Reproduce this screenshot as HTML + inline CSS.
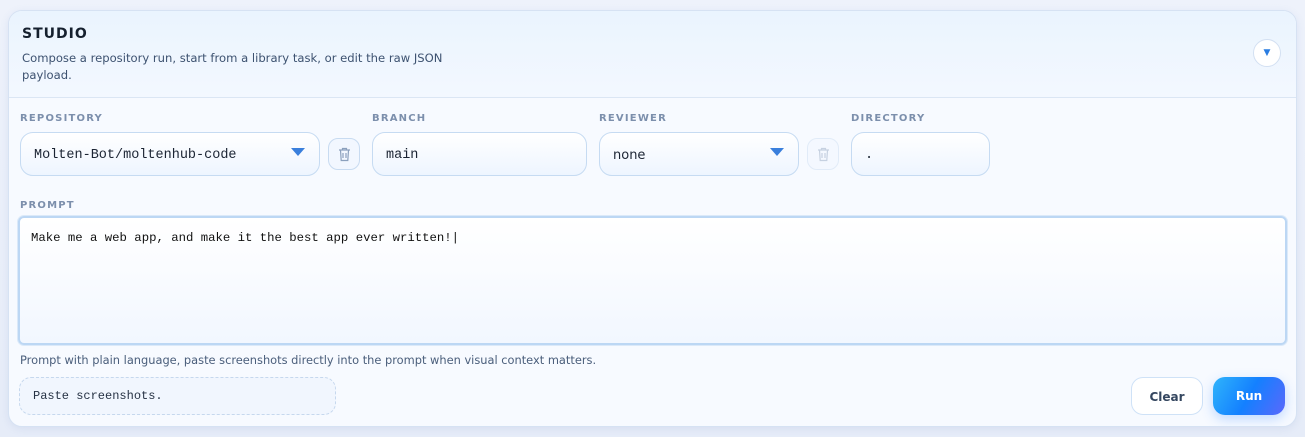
<!DOCTYPE html>
<html><head><style>
*{box-sizing:border-box;margin:0;padding:0}
body{width:1305px;height:437px;background:linear-gradient(180deg,#eef2fb,#e6ecf8);font-family:"DejaVu Sans","Liberation Sans",sans-serif;position:relative;overflow:hidden}
.card{position:absolute;left:8px;top:10px;width:1289px;height:417px;border:1px solid #d6e2f3;border-radius:14px;background:#f7faff;overflow:hidden;box-shadow:0 2px 8px rgba(120,150,200,.15)}
.hdr{position:absolute;left:0;top:0;width:100%;height:87px;background:linear-gradient(180deg,#eaf4fe,#f3f8ff);border-bottom:1px solid #dbe6f4}
h1{position:absolute;left:13px;top:15px;font-size:14px;font-weight:bold;letter-spacing:1px;color:#15202e}
.desc{position:absolute;left:13px;top:39px;width:440px;font-size:11.6px;line-height:17px;color:#3d5270}
.tog{position:absolute;left:1244px;top:28px;width:28px;height:28px;border-radius:50%;background:#fff;border:1px solid #d3e0f2;color:#2a7de1;font-size:9px;text-align:center;line-height:27px}
.lbl{position:absolute;top:102px;font-size:10px;font-weight:bold;letter-spacing:1.2px;color:#7c8fac}
.in{position:absolute;top:121px;height:44px;border:1px solid #c6dbf2;border-radius:13px;background:linear-gradient(180deg,#fff,#eef5ff);font-family:"Liberation Mono",monospace;font-size:13.5px;color:#1b2433;padding:2px 13px 0;line-height:42px}
.arr{position:absolute;right:14px;top:15px;width:0;height:0;border-left:7px solid transparent;border-right:7px solid transparent;border-top:8px solid #3a7fdc}
.tr{position:absolute;top:127px;width:32px;height:32px;border:1px solid #c8dbf1;border-radius:10px;background:#f2f7ff}
.tr svg{position:absolute;left:9px;top:8px}
.ta{position:absolute;left:9px;top:205px;width:1269px;height:129px;border:2px solid #bcd7f4;box-shadow:0 0 0 1px #dbe9f9;border-radius:6px;background:linear-gradient(180deg,#fff,#f2f7ff);font-family:"Liberation Mono",monospace;font-size:12.3px;color:#111;padding:13px 11px}
.hint{position:absolute;left:11px;top:342px;font-size:11.4px;color:#4a5e7b}
.paste{position:absolute;left:10px;top:366px;width:317px;height:38px;border:1px dashed #c6d8ee;border-radius:12px;background:#f1f6fe;font-family:"Liberation Mono",monospace;font-size:12px;color:#263244;padding-left:13px;line-height:36px}
.btn{position:absolute;top:366px;height:38px;border-radius:12px;font-size:12px;font-weight:bold;text-align:center;line-height:39px}
</style></head><body>
<div class="card">
<div class="hdr">
<h1>STUDIO</h1>
<div class="desc">Compose a repository run, start from a library task, or edit the raw JSON payload.</div>
<div class="tog">▼</div>
</div>
<div class="lbl" style="left:11px">REPOSITORY</div>
<div class="lbl" style="left:363px">BRANCH</div>
<div class="lbl" style="left:590px">REVIEWER</div>
<div class="lbl" style="left:842px">DIRECTORY</div>
<div class="in" style="left:11px;width:300px">Molten-Bot/moltenhub-code<div class="arr"></div></div>
<div class="tr" style="left:319px"><svg width="13" height="15" viewBox="0 0 13 15" fill="none" stroke="#8ba0bd" stroke-width="1.2"><path d="M1 3h11M4.5 3V1.5h4V3M2.5 3l.7 10.5h6.6L10.5 3M5 6v5M8 6v5"/></svg></div>
<div class="in" style="left:363px;width:215px">main</div>
<div class="in" style="left:590px;width:200px;font-family:'DejaVu Sans',sans-serif;font-size:13px">none<div class="arr"></div></div>
<div class="tr" style="left:798px;opacity:.45"><svg width="13" height="15" viewBox="0 0 13 15" fill="none" stroke="#8ba0bd" stroke-width="1.2"><path d="M1 3h11M4.5 3V1.5h4V3M2.5 3l.7 10.5h6.6L10.5 3M5 6v5M8 6v5"/></svg></div>
<div class="in" style="left:842px;width:139px">.</div>
<div class="lbl" style="left:11px;top:189px">PROMPT</div>
<div class="ta">Make me a web app, and make it the best app ever written!|</div>
<div class="hint">Prompt with plain language, paste screenshots directly into the prompt when visual context matters.</div>
<div class="paste">Paste screenshots.</div>
<div class="btn" style="left:1122px;width:72px;background:#fff;border:1px solid #cfe2f7;color:#34465f">Clear</div>
<div class="btn" style="left:1204px;width:72px;background:linear-gradient(120deg,#2fb4fb,#1480ff 50%,#5b68fb);color:#fff;box-shadow:0 4px 12px rgba(60,140,255,.3)">Run</div>
</div>
</body></html>
